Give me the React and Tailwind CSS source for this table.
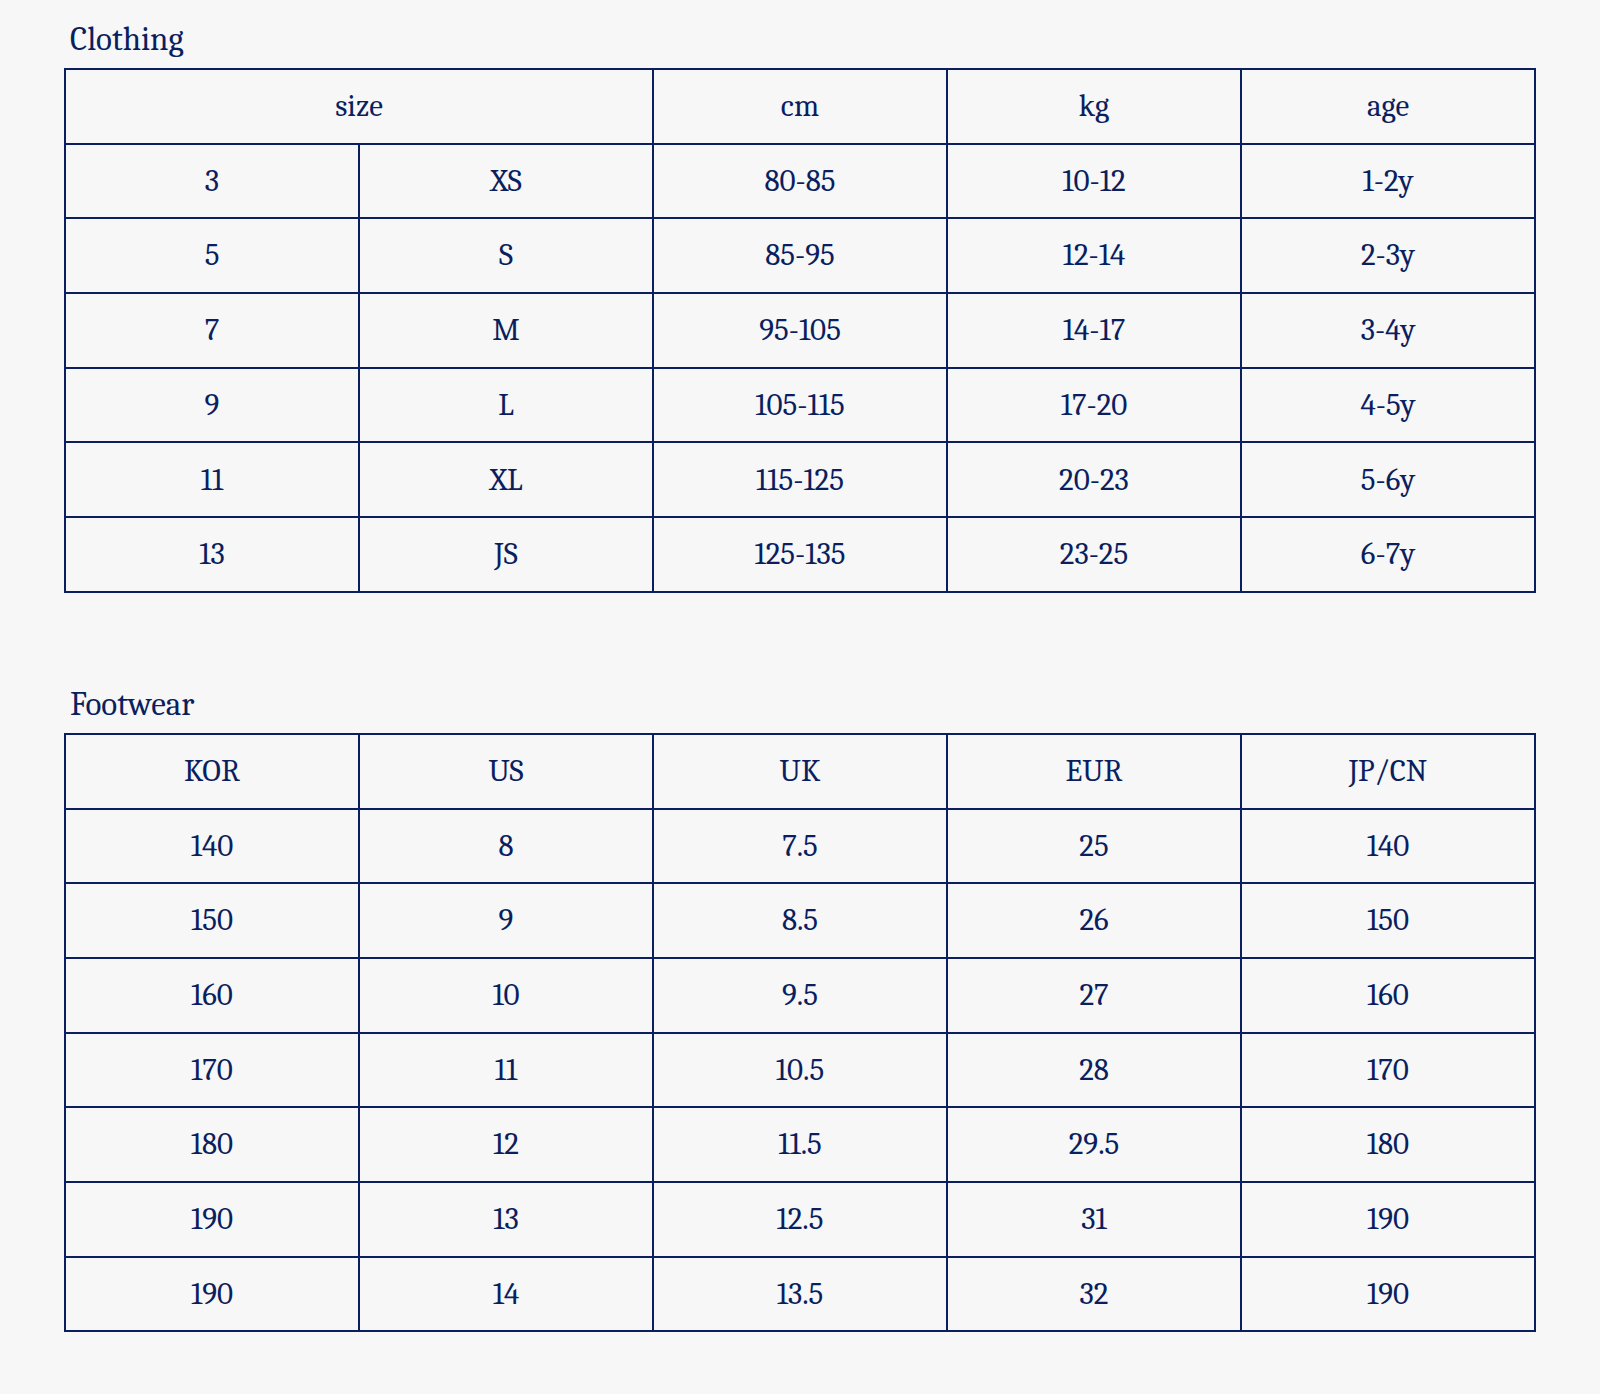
const CLOTHING = [
  ["3", "XS", "80-85", "10-12", "1-2y"],
  ["5", "S", "85-95", "12-14", "2-3y"],
  ["7", "M", "95-105", "14-17", "3-4y"],
  ["9", "L", "105-115", "17-20", "4-5y"],
  ["11", "XL", "115-125", "20-23", "5-6y"],
  ["13", "JS", "125-135", "23-25", "6-7y"],
];

const FOOTWEAR_HEAD = ["KOR", "US", "UK", "EUR", "JP/CN"];
const FOOTWEAR = [
  ["140", "8", "7.5", "25", "140"],
  ["150", "9", "8.5", "26", "150"],
  ["160", "10", "9.5", "27", "160"],
  ["170", "11", "10.5", "28", "170"],
  ["180", "12", "11.5", "29.5", "180"],
  ["190", "13", "12.5", "31", "190"],
  ["190", "14", "13.5", "32", "190"],
];

const cell = "border-2 border-[#0b1f5f] h-[74.7px] p-0 text-center align-middle";

function Cols() {
  return (
    <colgroup>
      {[0, 1, 2, 3, 4].map((i) => <col key={i} className="w-1/5" />)}
    </colgroup>
  );
}

function Title({ children, className = "" }) {
  return (
    <h2 className={"pl-[6px] text-[33px] leading-none " + className}>{children}</h2>
  );
}

export default function App() {
  return (
    <div className="min-h-[1394px] bg-[#f7f7f7] px-16 pt-[23px] font-serif font-medium text-[#0b1f5f]">
      <Title>Clothing</Title>
      <table className="mt-[12px] w-full table-fixed border-collapse text-[31px]">
        <Cols />
        <tbody>
          <tr>
            <td className={cell} colSpan={2}>size</td>
            <td className={cell}>cm</td>
            <td className={cell}>kg</td>
            <td className={cell}>age</td>
          </tr>
          {CLOTHING.map((r) => (
            <tr key={r[0]}>
              {r.map((v, i) => <td key={i} className={cell}>{v}</td>)}
            </tr>
          ))}
        </tbody>
      </table>

      <Title className="mt-[95px]">Footwear</Title>
      <table className="mt-[12px] w-full table-fixed border-collapse text-[31px]">
        <Cols />
        <tbody>
          <tr>
            {FOOTWEAR_HEAD.map((h) => <td key={h} className={cell}>{h}</td>)}
          </tr>
          {FOOTWEAR.map((r, j) => (
            <tr key={j}>
              {r.map((v, i) => <td key={i} className={cell}>{v}</td>)}
            </tr>
          ))}
        </tbody>
      </table>
    </div>
  );
}
